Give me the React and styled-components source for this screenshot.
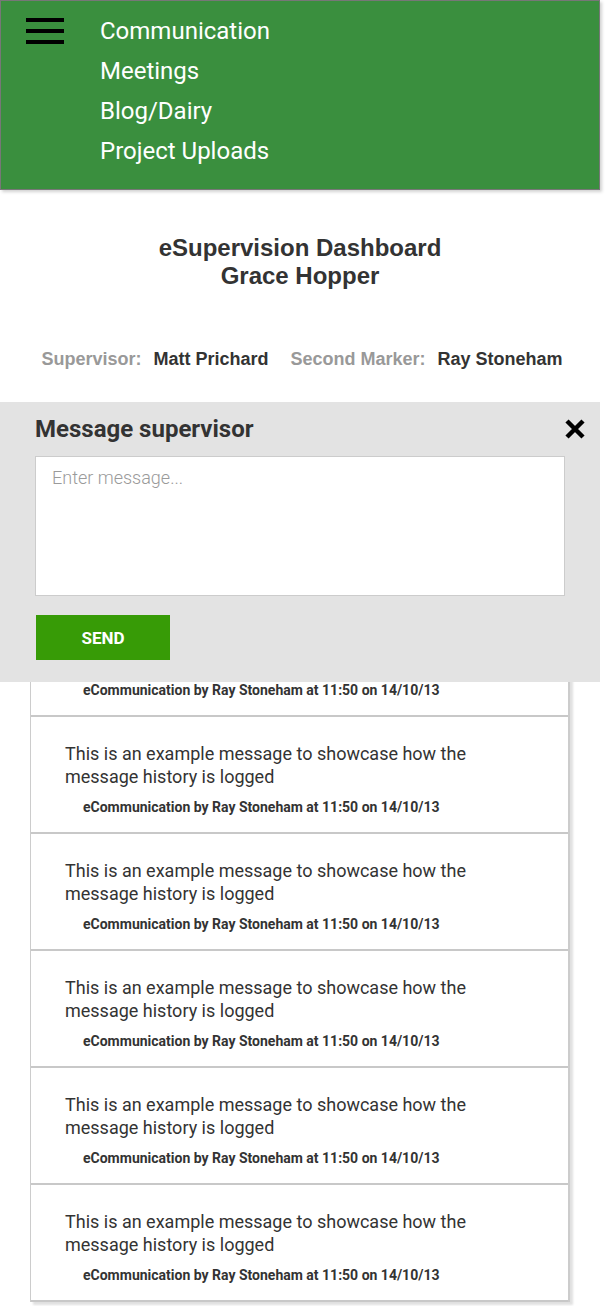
import styled, { createGlobalStyle } from "styled-components";

const GlobalStyle = createGlobalStyle`
  html, body {
    margin: 0;
    padding: 0;
    background: #ffffff;
  }
  * {
    box-sizing: border-box;
  }
`;

const Page = styled.div`
  width: 600px;
  padding-bottom: 4px;
  font-family: Roboto, "Liberation Sans", sans-serif;
`;

const Header = styled.header`
  display: flex;
  border: 1px solid #777777;
  background-color: #3a8f3e;
  padding: 10px 0 18px 25px;
  box-shadow: 2px 2px 3px rgba(0, 0, 0, 0.18);
`;

const Burger = styled.button`
  display: flex;
  flex-direction: column;
  gap: 7px;
  width: 38px;
  height: 26px;
  margin-top: 7px;
  padding: 0;
  border: 0;
  background: none;
  cursor: pointer;

  span {
    display: block;
    height: 4px;
    background: #000000;
  }
`;

const Nav = styled.nav`
  display: flex;
  flex-direction: column;
  margin-left: 36px;
`;

const NavLink = styled.a`
  font-size: 24px;
  line-height: 40px;
  color: #ffffff;
  text-decoration: none;
`;

const Title = styled.h1`
  margin: 44px 0 0;
  font-family: "Liberation Sans", Arial, sans-serif;
  font-size: 24px;
  line-height: 28px;
  font-weight: 700;
  text-align: center;
  color: #333333;
`;

const People = styled.div`
  display: flex;
  justify-content: center;
  gap: 22px;
  margin: 59px 0 33px;
  padding-left: 4px;
  font-family: "Liberation Sans", Arial, sans-serif;
  font-size: 18px;
  line-height: 20px;
  font-weight: 700;
`;

const Person = styled.div`
  display: flex;
  gap: 12px;
`;

const Label = styled.span`
  color: #999999;
`;

const Name = styled.span`
  color: #333333;
`;

const Composer = styled.section`
  position: relative;
  z-index: 1;
  background-color: #e3e3e3;
  padding: 14px 35px 22px;
`;

const ComposerHead = styled.div`
  display: flex;
  justify-content: space-between;
  align-items: center;
`;

const ComposerTitle = styled.h2`
  margin: 0;
  font-size: 24px;
  line-height: 26px;
  font-weight: 700;
  color: #333333;
`;

const CloseButton = styled.button`
  display: flex;
  width: 22px;
  height: 22px;
  margin-right: -21px;
  padding: 0;
  border: 0;
  background: none;
  cursor: pointer;
`;

const MessageInput = styled.textarea`
  display: block;
  width: 100%;
  height: 140px;
  margin-top: 14px;
  padding: 11px 16px;
  border: 1px solid #cccccc;
  background: #ffffff;
  resize: none;
  font-family: Roboto, sans-serif;
  font-size: 18px;
  font-weight: 300;
  line-height: 20px;
  color: #333333;

  &::placeholder {
    color: #9a9a9a;
  }
`;

const SendButton = styled.button`
  display: block;
  width: 134px;
  height: 45px;
  margin: 19px 0 0 1px;
  border: 0;
  background-color: #379b06;
  font-family: Roboto, sans-serif;
  font-size: 17px;
  font-weight: 700;
  color: #ffffff;
  cursor: pointer;
`;

const History = styled.ul`
  list-style: none;
  width: 540px;
  margin: -82px 0 0 30px;
  padding: 0;
  border-left: 1px solid #cccccc;
  border-right: 2px solid #cccccc;
  box-shadow: 3px 3px 2px rgba(0, 0, 0, 0.12);
`;

const Entry = styled.li`
  padding: 25px 34px 17px;
  border-bottom: 2px solid #c8c8c8;
`;

const EntryText = styled.p`
  max-width: 440px;
  margin: 0;
  font-size: 18px;
  line-height: 23px;
  color: #333333;
`;

const EntryMeta = styled.p`
  margin: 11px 0 0 18px;
  font-size: 14px;
  line-height: 16px;
  font-weight: 700;
  color: #333333;
`;

const links = ["Communication", "Meetings", "Blog/Dairy", "Project Uploads"];

const messages = Array.from({ length: 6 }, (_, i) => ({
  id: i,
  text: "This is an example message to showcase how the message history is logged",
  meta: "eCommunication by Ray Stoneham at 11:50 on 14/10/13",
}));

export default function App() {
  return (
    <Page>
      <GlobalStyle />
      <Header>
        <Burger aria-label="Menu">
          <span />
          <span />
          <span />
        </Burger>
        <Nav>
          {links.map((l) => (
            <NavLink key={l} href="#">
              {l}
            </NavLink>
          ))}
        </Nav>
      </Header>

      <Title>
        eSupervision Dashboard
        <br />
        Grace Hopper
      </Title>

      <People>
        <Person>
          <Label>Supervisor:</Label>
          <Name>Matt Prichard</Name>
        </Person>
        <Person>
          <Label>Second Marker:</Label>
          <Name>Ray Stoneham</Name>
        </Person>
      </People>

      <Composer>
        <ComposerHead>
          <ComposerTitle>Message supervisor</ComposerTitle>
          <CloseButton aria-label="Close">
            <svg width="22" height="22" viewBox="0 0 22 22">
              <path d="M3 3 L19 19 M19 3 L3 19" stroke="#000" strokeWidth="4.5" />
            </svg>
          </CloseButton>
        </ComposerHead>
        <MessageInput placeholder="Enter message..." />
        <SendButton>SEND</SendButton>
      </Composer>

      <History>
        {messages.map((m) => (
          <Entry key={m.id}>
            <EntryText>{m.text}</EntryText>
            <EntryMeta>{m.meta}</EntryMeta>
          </Entry>
        ))}
      </History>
    </Page>
  );
}
